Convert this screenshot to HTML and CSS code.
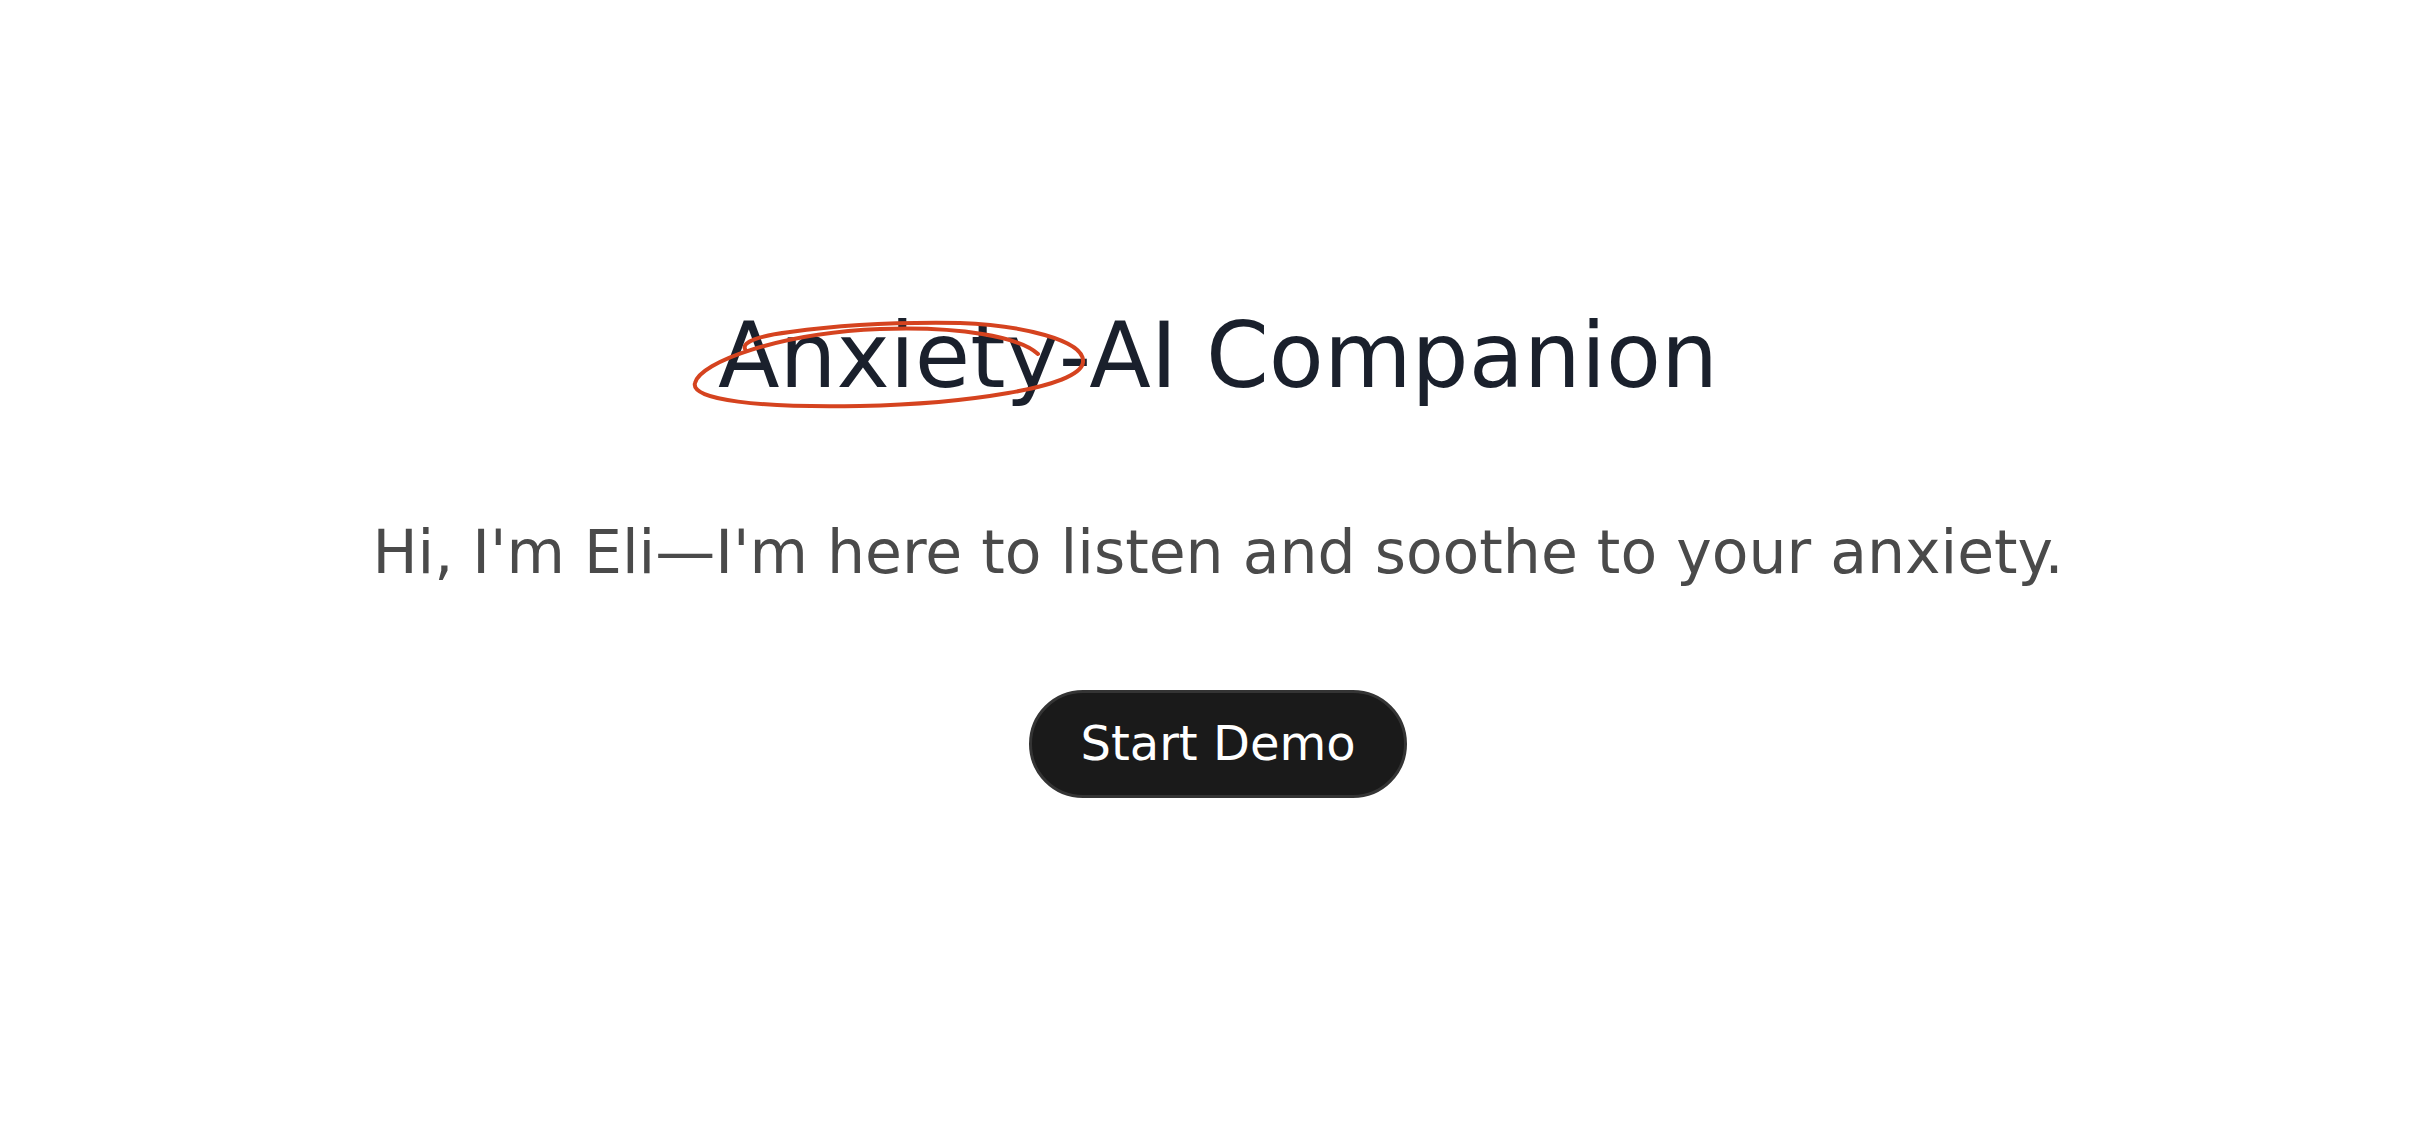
FILE: index.html
```html
<!DOCTYPE html>
<html lang="en">
<head>
<meta charset="utf-8">
<title>Anxiety-AI Companion</title>
<link rel="stylesheet" href="styles.css">
</head>
<body>
<main class="hero">
  <h1 class="title"><span class="circled">Anxiety<svg class="scribble" viewBox="680 310 420 110" width="420" height="110" aria-hidden="true"><path d="M745 347 C742 340 758 334 790 330 C840 323 900 320 960 321 C1020 323 1085 338 1083 360 C1081 386 960 402 860 404 C760 406 690 398 695 381 C700 360 780 331 880 327 C960 324 1020 335 1038 352" fill="none" stroke="#d5431f" stroke-width="4" stroke-linecap="round" stroke-linejoin="round"/></svg></span>-AI Companion</h1>
  <p class="subtitle">Hi, I'm Eli—I'm here to listen and soothe to your anxiety.</p>
  <button class="start" type="button">Start Demo</button>
</main>
</body>
</html>
```
FILE: styles.css
```css
html, body {
  margin: 0;
  padding: 0;
  background: #ffffff;
}

body {
  font-family: "DejaVu Sans", "Noto Sans", sans-serif;
}

.hero {
  display: flex;
  flex-direction: column;
  align-items: center;
  padding-top: 302px;
}

.title {
  margin: 0;
  font-size: 90px;
  font-weight: 400;
  line-height: 1.2;
  color: #1a202c;
}

.circled {
  position: relative;
}

.scribble {
  position: absolute;
  left: -38px;
  top: 9px;
  overflow: visible;
  pointer-events: none;
}

.subtitle {
  margin: 106px 0 0;
  font-size: 60px;
  line-height: 1.2;
  color: #4a4a4a;
}

.start {
  margin-top: 102px;
  font-family: "DejaVu Sans", "Noto Sans", sans-serif;
  font-size: 48px;
  line-height: 1.2;
  padding: 22px 48px;
  color: #ffffff;
  background: #1a1a1a;
  border: 3px solid #343434;
  border-radius: 999px;
  cursor: pointer;
}
```
